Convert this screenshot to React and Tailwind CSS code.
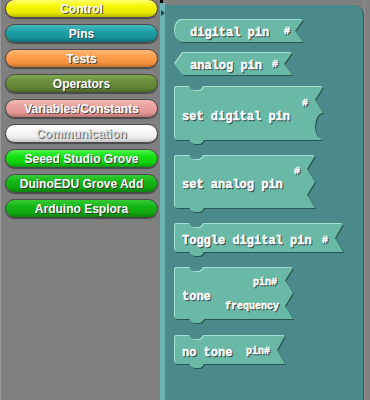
import React from "react";

const cats = [
  { label: "Control", cls: "bg-[linear-gradient(#ffff6a,#f6f600_40%,#e6e600_75%,#b9b900)]", txt: "text-white [text-shadow:1px_1px_0_#5a5a3a]" },
  { label: "Pins", cls: "bg-[linear-gradient(#45b8bc,#1ea0a4_40%,#18929a_75%,#11707a)]", txt: "text-white [text-shadow:1px_1px_0_#2f4a4a]" },
  { label: "Tests", cls: "bg-[linear-gradient(#ffb874,#ff9e4c_40%,#f4913e_75%,#c8702a)]", txt: "text-white [text-shadow:1px_1px_0_#5a4a3a]" },
  { label: "Operators", cls: "bg-[linear-gradient(#82a652,#6a8c3a_40%,#628434_75%,#4a6826)]", txt: "text-white [text-shadow:1px_1px_0_#3a3a3a]" },
  { label: "Variables/Constants", cls: "bg-[linear-gradient(#f6b8b4,#eaa09c_40%,#e29692_75%,#b87470)]", txt: "text-white [text-shadow:1px_1px_0_#5a4646]" },
  { label: "Communication", cls: "bg-[linear-gradient(#ffffff,#f6f6f6_40%,#ececec_75%,#c4c4c4)]", txt: "text-[#dcdcdc] [text-shadow:1px_1px_0_#6a6a6a]" },
  { label: "Seeed Studio Grove", cls: "bg-[linear-gradient(#4cf24c,#12e012_40%,#0cd00c_75%,#0a9a0a)]", txt: "text-white [text-shadow:1px_1px_0_#2a4a2a]" },
  { label: "DuinoEDU Grove Add", cls: "bg-[linear-gradient(#36cc36,#14b414_40%,#10a810_75%,#0a800a)]", txt: "text-white [text-shadow:1px_1px_0_#2a3a2a]" },
  { label: "Arduino Esplora", cls: "bg-[linear-gradient(#36cc36,#14b414_40%,#10a810_75%,#0a800a)]", txt: "text-white [text-shadow:1px_1px_0_#2a3a2a]" },
];

const blocks = [
  { mt: "mt-[14px]", w: 128, h: 22, left: "round", sockets: [["n", 22]],
    texts: [{ t: "digital pin", x: 15, y: 16 }, { t: "#", x: 109, y: 14, s: 1 }] },
  { mt: "mt-[4px]", w: 117, h: 22, left: "point", sockets: [["n", 22]],
    texts: [{ t: "analog pin", x: 15, y: 16 }, { t: "#", x: 97, y: 14, s: 1 }] },
  { mt: "mt-[5px]", w: 148, h: 53, left: "flat", cmd: true, sockets: [["n", 26], ["r", 27]],
    texts: [{ t: "set digital pin", x: 7, y: 33 }, { t: "#", x: 127, y: 19, s: 1 }] },
  { mt: "mt-[9px]", w: 140, h: 52, left: "flat", cmd: true, sockets: [["n", 26], ["n", 26]],
    texts: [{ t: "set analog pin", x: 7, y: 32 }, { t: "#", x: 119, y: 18, s: 1 }] },
  { mt: "mt-[9px]", w: 168, h: 28, left: "flat", cmd: true, sockets: [["n", 28]],
    texts: [{ t: "Toggle digital pin", x: 7, y: 20 }, { t: "#", x: 147, y: 19, s: 1 }] },
  { mt: "mt-[9px]", w: 118, h: 51, left: "flat", cmd: true, sockets: [["n", 25], ["n", 26]],
    texts: [{ t: "tone", x: 7, y: 32 }, { t: "pin#", x: 78, y: 17, s: 1 }, { t: "frequency", x: 50, y: 41, s: 1 }] },
  { mt: "mt-[10px]", w: 110, h: 28, left: "flat", cmd: true, sockets: [["n", 28]],
    texts: [{ t: "no tone", x: 7, y: 20 }, { t: "pin#", x: 71, y: 18, s: 1 }] },
];

function pathFor(b) {
  const { w, h, left, sockets, cmd } = b;
  let d = "";
  if (left === "round") d += "M 7 0";
  else if (left === "point") d += "M 8 0";
  else d += "M 0 2 Q 0 0 2 0";
  if (cmd) d += " L 15 0 Q 17 4 20 4 L 24 4 Q 27 4 29 0";
  d += ` L ${w} 0`;
  let y = 0;
  for (const [t, sh] of sockets) {
    if (t === "n") d += ` L ${w - 8} ${y + sh / 2} L ${w} ${y + sh}`;
    else d += ` A 8 ${sh / 2} 0 0 0 ${w} ${y + sh}`;
    y += sh;
  }
  if (cmd) d += ` L 29 ${h} Q 27 ${h + 4} 24 ${h + 4} L 20 ${h + 4} Q 17 ${h + 4} 15 ${h}`;
  if (left === "round") d += ` L 7 ${h} A 7 ${h / 2} 0 0 1 7 0 Z`;
  else if (left === "point") d += ` L 8 ${h} L 0 ${h / 2} Z`;
  else d += ` L 2 ${h} Q 0 ${h} 0 ${h - 2} Z`;
  return d;
}

function Block({ b }) {
  const d = pathFor(b);
  return (
    <div className={b.mt}>
      <svg width={b.w + 5} height={b.h + 7} className="block">
        <path d={d} transform="translate(2,2)" fill="#2a5650" />
        <path d={d} fill="#a3dfd0" />
        <path d={d} transform="translate(1,1)" fill="#69b9a6" />
        {b.texts.map((tx, i) => (
          <g key={i} fontFamily="'Liberation Mono', 'Courier New', monospace" fontWeight="bold" fontSize={tx.s ? 10 : 12}>
            <text x={tx.x + 2} y={tx.y + 2} fill="#2a4843" stroke="#2a4843" strokeWidth={0.45}>{tx.t}</text>
            <text x={tx.x + 1} y={tx.y + 1} fill="#ffffff" stroke="#ffffff" strokeWidth={0.45}>{tx.t}</text>
          </g>
        ))}
      </svg>
    </div>
  );
}

export default function App() {
  return (
    <div className="flex h-[400px] w-[370px] overflow-hidden bg-[#808080]">
      <div className="flex h-full w-[160px] shrink-0 flex-col gap-[6px] border-l border-[#9a9a9a] pl-[4px]">
        {cats.map((c, i) => (
          <div
            key={c.label}
            className={`flex h-[19px] w-[153px] shrink-0 items-center justify-center rounded-full border border-[#4a4a4a] shadow-[0_1px_1px_rgba(0,0,0,0.45)] ${c.cls} ${i === 0 ? "-mt-px" : ""}`}
          >
            <span className={`font-['Liberation_Sans',Arial,sans-serif] text-[12px] font-bold leading-none ${c.txt}`}>
              {c.label}
            </span>
          </div>
        ))}
      </div>
      <div className="flex h-full w-[5px] shrink-0 flex-col">
        <div className="h-[3px] w-[3px] bg-black" />
        <div className="flex-1 bg-[#6bb4b4] pt-[7px] pl-[1px]">
          <div className="h-0 w-0 border-y-[3px] border-l-[4px] border-y-transparent border-l-[#1d4a4c]" />
        </div>
      </div>
      <div className="mt-[5px] flex h-[395px] w-[199px] shrink-0 flex-col items-start rounded-tr-[10px] border-r border-[#2f5c5c] bg-[#4a8a8a] pl-[9px]">
        {blocks.map((b, i) => (
          <Block key={i} b={b} />
        ))}
      </div>
      <div className="flex-1 border-l border-[#8e8e8e] bg-[#808080]" />
    </div>
  );
}
